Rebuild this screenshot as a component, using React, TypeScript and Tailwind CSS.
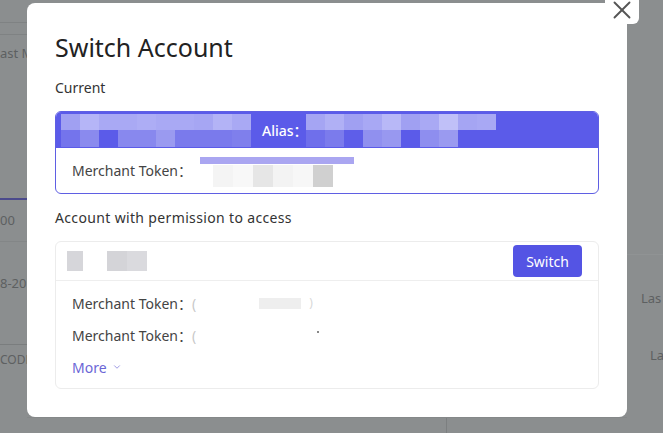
import { X, ChevronDown } from 'lucide-react'

const leftTop = ['#a0a0f2', '#b5b5f7', '#a9a9f4', '#a9a9f4', '#adadf5', '#a9a9f4', '#a9a9f4', '#a6a6f3', '#b3b3f6', '#a9a9f4']
const leftBottom = ['#7474ec', '#8a8aee', '#5b5be9', '#8888ee', '#8888ee', '#9a9af0', '#7a7aec', '#7a7aec', '#7a7aec', '#7f7fec']
const rightTop = ['#a5a5f3', '#b0b0f5', '#a0a0f2', '#a8a8f4', '#b8b8f7', '#a0a0f2', '#a9a9f4', '#c0c0f8', '#a5a5f3', '#a8a8f4']
const rightBottom = ['#6f6feb', '#7b7bec', '#5e5ee9', '#9090ef', '#9898f0', '#5b5be9', '#8e8eef', '#9a9af0']
const tokenCells = ['#f4f4f4', '#f8f8f8', '#e6e6e6', '#f3f3f3', '#f7f7f7', '#d0d0d0']

const Mosaic = ({ top, bottom }: { top: string[]; bottom: string[] }) => (
  <div className="flex flex-col">
    <div className="flex">
      {top.map((c, i) => (
        <div key={i} className="w-[19px] h-[16px]" style={{ background: c }} />
      ))}
    </div>
    <div className="flex">
      {bottom.map((c, i) => (
        <div key={i} className="w-[19px] h-[17px]" style={{ background: c }} />
      ))}
    </div>
  </div>
)

// faded page behind the overlay, mostly hidden by the dialog
const BackgroundPage = () => (
  <div className="absolute inset-0 text-[13px] text-[#5d6061]">
    <div className="absolute left-0 top-[22px] w-[27px] h-px bg-[#7f8283]" />
    <div className="absolute left-0 top-[34px] w-[27px] h-px bg-[#7f8283]" />
    <div className="absolute left-0 top-[44px]">ast M</div>
    <div className="absolute left-0 top-[198px] w-[27px] h-[2px] bg-[#4b4a8c]" />
    <div className="absolute left-0 top-[211px]">00</div>
    <div className="absolute left-0 top-[241px] w-[27px] h-px bg-[#838687]" />
    <div className="absolute left-0 top-[274px]">8-20</div>
    <div className="absolute left-0 top-[344px] w-[27px] h-px bg-[#7a7d7e]" />
    <div className="absolute left-0 top-[351px] text-[12px]">CODE</div>
    <div className="absolute left-[627px] top-[254px] w-[36px] h-px bg-[#909394]" />
    <div className="absolute left-[641px] top-[289px]">Las</div>
    <div className="absolute left-[650px] top-[346px]">La</div>
    <div className="absolute left-[446px] top-[417px] w-px h-[16px] bg-[#7c7f80]" />
    <div className="absolute left-[27px] top-[417px] w-[600px] h-px bg-[#858889]" />
  </div>
)

const TokenRow = ({ children }: { children?: React.ReactNode }) => (
  <div className="h-[32px] flex items-center text-[14px] text-[#444]">
    <span>Merchant Token：</span>
    <span className="text-[#c8c8c8]">(</span>
    {children}
  </div>
)

export default function App() {
  return (
    <div
      className="relative w-[663px] h-[433px] overflow-hidden bg-[#8b8e8f]"
      style={{ fontFamily: '"Noto Sans", "Noto Sans CJK SC", sans-serif' }}
    >
      <BackgroundPage />

      <div className="absolute left-[27px] top-[3px] w-[600px] h-[414px] bg-white rounded-[8px] px-[28px] pt-[28px] flex flex-col">
        <h1 className="text-[25px] leading-[32px] text-[#222]">Switch Account</h1>

        <div className="mt-[15px] text-[14px] leading-[20px] text-[#333]">Current</div>

        <div className="mt-[13px] rounded-[6px] border border-[#5f5fe3] overflow-hidden">
          <div className="h-[36px] bg-[#5b5be9] flex items-center pl-[5px]">
            <Mosaic top={leftTop} bottom={leftBottom} />
            <span className="ml-[11px] text-[14px] text-white font-medium">Alias：</span>
            <div className="-ml-[2px]">
              <Mosaic top={rightTop} bottom={rightBottom} />
            </div>
          </div>
          <div className="h-[45px] flex items-center pl-[16px] text-[14px] text-[#444]">
            <span>Merchant Token：</span>
            <div className="relative ml-[8px] self-stretch">
              <div className="absolute left-0 top-[9px] w-[154px] h-[7px] bg-[#aaa6f1]" />
              <div className="absolute left-[13px] top-[17px] flex">
                {tokenCells.map((c, i) => (
                  <div key={i} className="w-[20px] h-[22px]" style={{ background: c }} />
                ))}
              </div>
            </div>
          </div>
        </div>

        <div className="mt-[14px] text-[14px] leading-[20px] tracking-[0.35px] text-[#333]">
          Account with permission to access
        </div>

        <div className="mt-[13px] rounded-[6px] border border-[#ececec]">
          <div className="h-[39px] flex items-center justify-between pl-[11px] pr-[16px] border-b border-[#eeeeee]">
            <div className="flex items-center gap-[24px]">
              <div className="w-[16px] h-[20px] bg-[#d6d6da]" />
              <div className="flex">
                <div className="w-[20px] h-[20px] bg-[#d4d4d8]" />
                <div className="w-[20px] h-[20px] bg-[#dadade]" />
              </div>
            </div>
            <button className="w-[69px] h-[32px] rounded-[4px] bg-[#5454e4] text-white text-[14px]">Switch</button>
          </div>
          <div className="pl-[16px] pt-[6px] pb-[5px]">
            <TokenRow>
              <div className="ml-[63px] w-[42px] h-[11px] bg-[#eeeeee]" />
              <span className="ml-[8px] text-[#d8d8d8] text-[12px]">)</span>
            </TokenRow>
            <TokenRow>
              <div className="ml-[121px] -mt-[6px] w-[2px] h-[2px] bg-[#888]" />
            </TokenRow>
            <div className="h-[32px] flex items-center text-[14px] text-[#6b66d6] gap-[5px]">
              More
              <ChevronDown size={10} strokeWidth={2} className="text-[#8a86dd]" />
            </div>
          </div>
        </div>
      </div>

      <div className="absolute left-[605px] top-[-8px] w-[34px] h-[32px] bg-white rounded-[6px] flex items-end justify-center pb-[-2px]">
        <X size={30} strokeWidth={1.5} className="text-[#555] -mb-[1px]" />
      </div>
    </div>
  )
}
